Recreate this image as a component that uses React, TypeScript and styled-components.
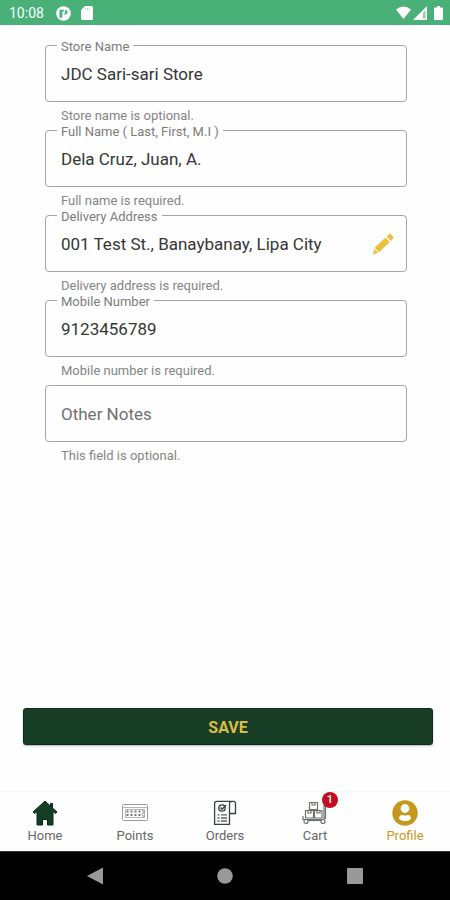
import React, { useId } from "react";
import styled, { createGlobalStyle } from "styled-components";

const GlobalStyle = createGlobalStyle`
  *, *::before, *::after { box-sizing: border-box; }
  body { margin: 0; background: #fff; font-family: Roboto, "Liberation Sans", sans-serif; }
  button, input { font-family: inherit; }
`;

const Screen = styled.div`
  display: flex;
  flex-direction: column;
  min-height: 100vh;
  background: #fefefe;
`;

const StatusBar = styled.header`
  display: flex;
  align-items: center;
  justify-content: space-between;
  height: 25px;
  padding: 1px 5px 0 9px;
  background: #49b177;
  color: #fff;
  font-size: 14px;
  line-height: 24px;
`;

const StatusGroup = styled.div<{ $gap: number }>`
  display: flex;
  align-items: center;
  gap: ${(p) => p.$gap}px;
  svg { display: block; }
`;

const Form = styled.form`
  display: flex;
  flex: 1;
  flex-direction: column;
  padding: 12px 17px 46px 23px;
`;

const Fields = styled.div`
  display: flex;
  flex-direction: column;
  margin: 0 26px 0 22px;
`;

const Outline = styled.fieldset`
  display: flex;
  align-items: center;
  min-width: 0;
  height: 65px;
  margin: 0;
  padding: 0 12px 0 11px;
  border: 1px solid #a4a4a4;
  border-radius: 4px;
`;

const Legend = styled.legend<{ $empty: boolean }>`
  height: 16px;
  padding: ${(p) => (p.$empty ? "0" : "0 4px")};
  color: #7c7c7c;
  font-size: 13px;
  line-height: 20px;
  white-space: pre;
`;

const TextInput = styled.input`
  flex: 1;
  min-width: 0;
  height: 40px;
  padding: 0 4px;
  border: 0;
  outline: 0;
  background: transparent;
  color: #363636;
  font-size: 17px;
  margin-bottom: 7px;
  &::placeholder { color: #707070; opacity: 1; }
`;

const Helper = styled.p`
  margin: 7px 0 0 16px;
  color: #858585;
  font-size: 13px;
  line-height: 13px;
`;

const EditButton = styled.button`
  display: flex;
  margin: 0 0 7px;
  padding: 0;
  border: 0;
  background: none;
  cursor: pointer;
`;

const SaveButton = styled.button`
  height: 37px;
  margin-top: auto;
  padding: 2px 0 0;
  border: 1px solid #0d2c19;
  border-radius: 3px;
  background: #193e28;
  box-shadow: 0 1px 2px rgba(0, 0, 0, 0.3);
  color: #d8bf42;
  font-size: 16px;
  font-weight: 700;
  cursor: pointer;
`;

const TabBar = styled.nav`
  display: grid;
  grid-template-columns: repeat(5, 1fr);
  height: 60px;
  border-top: 1px solid #f7f7f7;
  background: #fefefe;
`;

const Tab = styled.a<{ $active?: boolean }>`
  display: flex;
  flex-direction: column;
  align-items: center;
  padding-top: 8px;
  color: ${(p) => (p.$active ? "#c99a20" : "#666")};
  font-size: 13px;
  line-height: 16px;
  text-decoration: none;
`;

const TabIcon = styled.span`
  position: relative;
  display: flex;
  margin-bottom: 2px;
`;

const Badge = styled.span`
  position: absolute;
  top: -8px;
  right: -10px;
  width: 16px;
  height: 16px;
  border-radius: 50%;
  background: #c20c20;
  color: #fff;
  font-size: 11px;
  font-weight: 500;
  line-height: 16px;
  text-align: center;
`;

const SystemBar = styled.footer`
  display: flex;
  align-items: center;
  justify-content: center;
  height: 49px;
  border-top: 1px solid #333;
  background: #000;
`;

const SystemButton = styled.button`
  display: flex;
  justify-content: center;
  width: 40px;
  padding: 0;
  border: 0;
  background: none;
  cursor: pointer;
`;

const SystemKeys = styled.div`
  display: grid;
  grid-template-columns: repeat(3, 130px);
  justify-items: center;
`;

function Field({ label, value, helper, placeholder, editable }: {
  label?: string;
  value?: string;
  helper: string;
  placeholder?: string;
  editable?: boolean;
}) {
  const id = useId();
  return (
    <div>
      <Outline>
        <Legend $empty={!label}>{label && <label htmlFor={id}>{label}</label>}</Legend>
        <TextInput
          id={id}
          defaultValue={value}
          placeholder={placeholder}
          aria-label={label ? undefined : placeholder}
          aria-describedby={`${id}-help`}
        />
        {editable && (
          <EditButton type="button" aria-label="Edit delivery address">
            <svg width="22" height="22" viewBox="0 0 22 22" fill="#e9c13b">
              <path d="M.8 21.2 2.2 15.8 6.400 19.8Z" />
              <path d="M2.700 14.800 13.400 4.600 17.800 9 7.200 19.200Z" />
              <path d="m14.600 3.600 2.500-2.500q.8-.8 1.600 0l2.600 2.600q.7.7 0 1.500L18.900 7.900Z" />
            </svg>
          </EditButton>
        )}
      </Outline>
      <Helper id={`${id}-help`}>{helper}</Helper>
    </div>
  );
}

const HomeIcon = () => (
  <svg width="26" height="26" viewBox="0 0 26 26" fill="#143f26" stroke="#0c2716" strokeLinejoin="round">
    <path d="M13 1 1 12l1.300 1.500L5 11.600V25h5.500v-5.500h5V25H21V11.600l2.700 1.900L25 12l-4.500-4V3.500h-2v2.700Z" />
  </svg>
);

const PointsIcon = () => (
  <svg width="26" height="26" viewBox="0 0 26 26" fill="none" stroke="#999">
    <rect x=".5" y="4.500" width="25" height="16" rx="1" />
    <path d="M.5 7.500h25M3.500 9.500h19v8h-19Z" stroke="#b5b5b5" />
    <path d="M4.500 11.500h2m2 0h2m2 0h2m2 0h2M4.500 15h2m2 0h2m2 0h2m2 0h2" stroke="#777" strokeWidth="2" />
    <path d="m20 10 2.500 2-2.500 2m0 1 2.500 2" stroke="#888" />
  </svg>
);

const OrdersIcon = () => (
  <svg width="26" height="26" viewBox="0 0 26 26" fill="none" stroke="#39433d" strokeWidth="1.300">
    <path d="M17.500 13.500v10.800H2.600V3.500q0-2.200 2.200-2.200h16.700q2 0 2 2v10.200h-6V4q0-2.700 2.500-2.700" />
    <circle cx="10" cy="8" r="3.200" />
    <path d="m8.500 7.500 1.700 1.700L14 5" strokeWidth="1.500" />
    <path d="M5.500 14.800h2m1.500 0h6M5.500 18h2m1.500 0h6M5.500 21h2m1.500 0h6" stroke="#59625c" />
  </svg>
);

const CartIcon = () => (
  <svg width="26" height="26" viewBox="0 0 26 26" fill="none" stroke="#6b736e" strokeWidth="1.200">
    <path d="M7.500 2.500h8v7h-8ZM3.500 10.500h8v7.500h-8ZM12.500 10.500h7.500v7.500h-7.500Z" />
    <path d="M10 2.500v2.500h3V2.500M6 10.500V13h3v-2.500M15 10.500V13h3v-2.500" />
    <path d="M1 16v3.500h21V5M23.500 4v15" />
    <circle cx="4" cy="21.500" r="2" />
    <circle cx="21" cy="21.500" r="2" />
    <path d="M6 20.500h13" />
  </svg>
);

const ProfileIcon = () => (
  <svg width="26" height="26" viewBox="0 0 26 26">
    <circle cx="13" cy="13" r="12.700" fill="#c5971b" />
    <circle cx="13" cy="8.500" r="4.400" fill="#fff" />
    <path d="M7 19v-.7q0-3.400 3.500-3.400 2.500 1 5 0 3.500 0 3.500 3.400v.7q-2.600 2.200-6 2.200T7 19Z" fill="#fff" />
  </svg>
);

const fields = [
  { label: "Store Name", value: "JDC Sari-sari Store", helper: "Store name is optional." },
  { label: "Full Name ( Last, First, M.I )", value: "Dela Cruz, Juan, A.", helper: "Full name is required." },
  { label: "Delivery Address", value: "001 Test St., Banaybanay, Lipa City", helper: "Delivery address is required.", editable: true },
  { label: "Mobile Number", value: "9123456789", helper: "Mobile number is required." },
  { placeholder: "Other Notes", helper: "This field is optional." },
];

const tabs = [
  { name: "Home", Icon: HomeIcon },
  { name: "Points", Icon: PointsIcon },
  { name: "Orders", Icon: OrdersIcon },
  { name: "Cart", Icon: CartIcon, count: 1 },
  { name: "Profile", Icon: ProfileIcon, active: true },
];

export default function App() {
  return (
    <Screen>
      <GlobalStyle />
      <StatusBar>
        <StatusGroup $gap={10}>
          <span>10:08</span>
          <svg width="17" height="15" viewBox="0 0 17 15">
            <circle cx="9.500" cy="7.500" r="7.300" fill="#fff" />
            <path d="M5.500 3.800h4.300v1.700H8.300v6.200H5.500ZM11 3.800q2.600.2 2.600 2.400T11 8.600H9.800v-1H11Z" fill="#49b177" />
          </svg>
          <svg width="12" height="14" viewBox="0 0 12 14">
            <path d="M4 0h6.500Q12 0 12 1.500v11q0 1.500-1.500 1.500h-9Q0 14 0 12.500V4Z" fill="#fff" />
            <path d="M4.500 2v2m2-2v2m2-2v2" stroke="#b9dfc9" />
          </svg>
        </StatusGroup>
        <StatusGroup $gap={2}>
          <svg width="15" height="14" viewBox="0 0 16 14" fill="#fff">
            <path d="M0 3.300Q8-3 16 3.300L8 13.500Z" />
          </svg>
          <svg width="14" height="14" viewBox="0 0 14 14">
            <path d="M0 14 14 0v14Z" fill="#fff" />
            <path d="M10 6.500 12.500 4v8.500H10Z" fill="#8fcfab" />
          </svg>
          <svg width="16" height="14" viewBox="0 0 16 14" fill="#fff">
            <path d="M6 1.500h2V0h3v1.500h2q1 0 1 1V13q0 1-1 1H6q-1 0-1-1V2.500q0-1 1-1Z" />
          </svg>
        </StatusGroup>
      </StatusBar>
      <Form onSubmit={(e) => e.preventDefault()}>
        <Fields>
          {fields.map((f) => (
            <Field key={f.helper} {...f} />
          ))}
        </Fields>
        <SaveButton type="submit">SAVE</SaveButton>
      </Form>
      <TabBar aria-label="Main">
        {tabs.map(({ name, Icon, count, active }) => (
          <Tab key={name} href={`#${name.toLowerCase()}`} $active={active} aria-current={active ? "page" : undefined}>
            <TabIcon>
              <Icon />
              {count && <Badge>{count}</Badge>}
            </TabIcon>
            {name}
          </Tab>
        ))}
      </TabBar>
      <SystemBar>
        <SystemKeys>
          <SystemButton type="button" aria-label="Back">
            <svg width="18" height="18" viewBox="0 0 18 18" fill="#999"><path d="M1 9 17 .500v17Z" /></svg>
          </SystemButton>
          <SystemButton type="button" aria-label="Home screen">
            <svg width="18" height="18" viewBox="0 0 18 18" fill="#999"><circle cx="9" cy="9" r="7.800" /></svg>
          </SystemButton>
          <SystemButton type="button" aria-label="Recent apps">
            <svg width="18" height="18" viewBox="0 0 18 18" fill="#999"><rect x="1" y="1" width="16" height="16" rx="1" /></svg>
          </SystemButton>
        </SystemKeys>
      </SystemBar>
    </Screen>
  );
}
